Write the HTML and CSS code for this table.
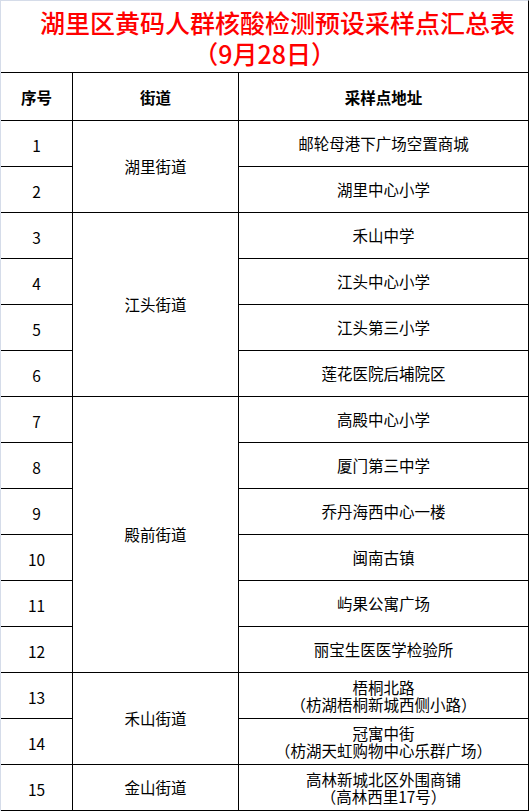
FILE: index.html
```html
<!DOCTYPE html>
<html lang="zh-CN">
<head>
<meta charset="utf-8">
<title>湖里区黄码人群核酸检测预设采样点汇总表</title>
<link rel="stylesheet" href="styles.css">
</head>
<body>
<div class="sheet">
<table class="grid">
<colgroup><col class="c-no"><col class="c-street"><col class="c-addr"></colgroup>
<tr>
<td class="title" colspan="3">
<div class="title-l1">湖里区黄码人群核酸检测预设采样点汇总表</div>
<div class="title-l2">（9月28日）</div>
</td>
</tr>
<tr class="head">
<th>序号</th><th>街道</th><th>采样点地址</th>
</tr>
<tr><td class="num">1</td><td class="street" rowspan="2">湖里街道</td><td>邮轮母港下广场空置商城</td></tr>
<tr><td class="num">2</td><td>湖里中心小学</td></tr>
<tr><td class="num">3</td><td class="street" rowspan="4">江头街道</td><td>禾山中学</td></tr>
<tr><td class="num">4</td><td>江头中心小学</td></tr>
<tr><td class="num">5</td><td>江头第三小学</td></tr>
<tr><td class="num">6</td><td>莲花医院后埔院区</td></tr>
<tr><td class="num">7</td><td class="street" rowspan="6">殿前街道</td><td>高殿中心小学</td></tr>
<tr><td class="num">8</td><td>厦门第三中学</td></tr>
<tr><td class="num">9</td><td>乔丹海西中心一楼</td></tr>
<tr><td class="num">10</td><td>闽南古镇</td></tr>
<tr><td class="num">11</td><td>屿果公寓广场</td></tr>
<tr><td class="num">12</td><td>丽宝生医医学检验所</td></tr>
<tr><td class="num">13</td><td class="street" rowspan="2">禾山街道</td><td class="two"><span class="ln">梧桐北路</span><span class="ln">（枋湖梧桐新城西侧小路）</span></td></tr>
<tr><td class="num">14</td><td class="two"><span class="ln">冠寓中街</span><span class="ln">（枋湖天虹购物中心乐群广场）</span></td></tr>
<tr><td class="num">15</td><td class="street">金山街道</td><td class="two"><span class="ln">高林新城北区外围商铺</span><span class="ln">（高林西里17号）</span></td></tr>
</table>
</div>
</body>
</html>
```

FILE: styles.css
```css
html, body {
  margin: 0;
  padding: 0;
  background: #ffffff;
}

body {
  font-family: "Noto Sans CJK SC", "Noto Sans", sans-serif;
  color: #000000;
}

.sheet {
  width: 528px;
  border-left: 1px solid #d5dce9;
}

.grid {
  width: 528px;
  table-layout: fixed;
  border-collapse: separate;
  border-spacing: 0;
}

.c-no { width: 72px; }
.c-street { width: 166px; }
.c-addr { width: 290px; }

.grid td,
.grid th {
  box-sizing: border-box;
  padding: 0;
  border-right: 1px solid #000;
  border-bottom: 1px solid #000;
  text-align: center;
  vertical-align: middle;
  font-size: 15.5px;
  font-weight: 400;
  line-height: 17px;
  height: 46px;
}

.grid td.title {
  height: 72px;
  border-top: 1px solid #d5dce9;
  border-bottom: none;
  vertical-align: top;
  padding-top: 6px;
  color: #ff0000;
  font-size: 25px;
  line-height: 31px;
  font-weight: 500;
}

.title-l1 {
  padding-left: 26px;
  white-space: nowrap;
}

.head th {
  height: 49px;
  border-top: 1px solid #000;
  font-weight: 700;
  font-size: 15.5px;
  padding-top: 1px;
}

.grid td.num {
  padding-top: 3px;
}

.grid td.two {
  padding-top: 1px;
}

.ln {
  display: block;
  height: 17px;
  line-height: 17px;
  white-space: nowrap;
}
```
